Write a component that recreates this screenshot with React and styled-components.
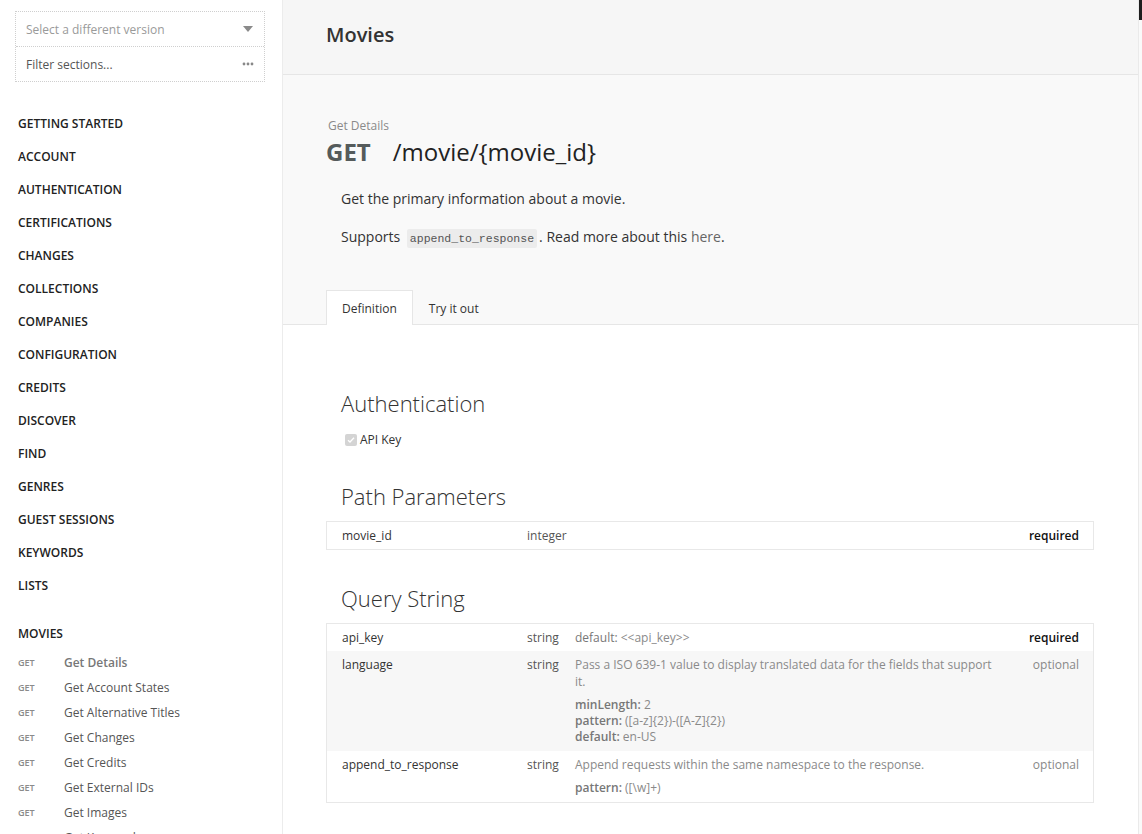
import React from "react";
import styled, { createGlobalStyle } from "styled-components";

const GlobalStyle = createGlobalStyle`
  html, body {
    margin: 0;
    padding: 0;
    background: #ffffff;
  }
  body {
    font-family: "Open Sans", "Liberation Sans", sans-serif;
    color: #333;
    -webkit-font-smoothing: antialiased;
  }
`;

const Page = styled.div`
  display: flex;
  width: 1142px;
  height: 834px;
  overflow: hidden;
`;

const Sidebar = styled.aside`
  width: 282px;
  flex-shrink: 0;
  border-right: 1px solid #ececec;
  height: 834px;
  overflow: hidden;
  background: #fff;
`;

const SearchBox = styled.div`
  margin: 11px 17px 0 15px;
  border: 1px dotted #cfcfcf;
`;

const SearchRow = styled.div`
  display: flex;
  align-items: center;
  justify-content: space-between;
  height: 34px;
  padding: 0 10px;
  font-size: 12px;
  color: ${(p) => (p.muted ? "#9a9a9a" : "#555")};
  & + & {
    border-top: 1px dotted #cfcfcf;
  }
`;

const Caret = styled.span`
  width: 0;
  height: 0;
  border-left: 5px solid transparent;
  border-right: 5px solid transparent;
  border-top: 6px solid #8a8a8a;
  margin-right: 1px;
`;

const NavList = styled.nav`
  padding: 36px 0 0 18px;
`;

const NavItem = styled.div`
  font-size: 12px;
  font-weight: 600;
  color: #222;
  text-transform: uppercase;
  height: ${(p) => (p.heading ? "22px" : "33px")};
  line-height: 12px;
  margin-top: ${(p) => (p.heading ? "15px" : "0")};
`;

const SubItem = styled.div`
  display: flex;
  align-items: center;
  height: 25px;
  font-size: 12px;
`;

const Verb = styled.span`
  width: 46px;
  font-size: 9px;
  color: #8a8a8a;
  font-weight: 600;
`;

const SubName = styled.span`
  color: ${(p) => (p.active ? "#777" : "#555")};
  font-weight: ${(p) => (p.active ? 600 : 400)};
`;

const Main = styled.main`
  flex: 1;
  display: flex;
  flex-direction: column;
  border-right: 1px solid #eaeaea;
  min-width: 0;
`;

const Header = styled.header`
  height: 75px;
  background: #f6f6f6;
  border-bottom: 1px solid #e6e6e6;
  display: flex;
  align-items: center;
  padding: 0 43px 6px;
  box-sizing: border-box;
`;

const PageTitle = styled.h1`
  margin: 0;
  font-size: 20px;
  font-weight: 600;
  color: #333;
`;

const Endpoint = styled.section`
  background: #f9f9f9;
  padding: 43px 0 0 43px;
  border-bottom: 1px solid #e6e6e6;
`;

const EndpointLabel = styled.div`
  font-size: 12px;
  color: #8a8a8a;
  margin-left: 2px;
  line-height: 16px;
`;

const EndpointLine = styled.div`
  display: flex;
  align-items: baseline;
  font-size: 24px;
  line-height: 32px;
  margin-top: 2px;
`;

const Method = styled.span`
  font-weight: 700;
  color: #555b5b;
  margin-right: 22px;
`;

const PathText = styled.span`
  color: #222;
`;

const Description = styled.p`
  margin: ${(p) => (p.first ? "20px" : "16px")} 0 0 15px;
  font-size: 14px;
  line-height: 22px;
  color: #333;
`;

const Code = styled.code`
  font-family: "Liberation Mono", "DejaVu Sans Mono", monospace;
  font-size: 11.5px;
  background: #ececec;
  color: #555;
  padding: 3px 3px;
  border-radius: 2px;
  margin: 0 2px 0 3px;
`;

const Link = styled.a`
  color: #666;
  text-decoration: none;
`;

const Tabs = styled.div`
  display: flex;
  margin-top: 40px;
  margin-bottom: -1px;
`;

const Tab = styled.div`
  height: 35px;
  display: flex;
  align-items: center;
  padding: 1px 15px 0;
  font-size: 12px;
  color: #333;
  box-sizing: border-box;
  border: 1px solid ${(p) => (p.active ? "#e6e6e6" : "transparent")};
  border-bottom: none;
  background: ${(p) => (p.active ? "#fff" : "transparent")};
`;

const Body = styled.div`
  padding: 63px 44px 0 43px;
`;

const SectionTitle = styled.h2`
  margin: ${(p) => (p.tight ? "0" : "33px")} 0 10px 15px;
  font-size: 22px;
  font-weight: 300;
  color: #333;
  line-height: 30px;
`;

const CheckRow = styled.label`
  display: flex;
  align-items: center;
  margin: 14px 0 0 19px;
  font-size: 12px;
  color: #333;
  gap: 3px;
  line-height: 16px;
`;

const CheckBox = styled.span`
  width: 12px;
  height: 12px;
  border-radius: 2px;
  background: #d4d4d4;
  display: inline-flex;
  align-items: center;
  justify-content: center;
`;

const Table = styled.div`
  border: 1px solid #e8e8e8;
`;

const Row = styled.div`
  display: grid;
  grid-template-columns: 185px 48px 1fr 70px;
  padding: ${(p) => (p.tall ? "5px 14px 6px 15px" : "5px 14px 5px 15px")};
  background: ${(p) => (p.striped ? "#f7f7f7" : "#fff")};
  font-size: 12px;
  line-height: 17px;
`;

const Name = styled.div`
  color: #333;
`;

const Type = styled.div`
  color: #555;
`;

const Desc = styled.div`
  color: #8a8a8a;
  padding-right: 8px;
`;

const Extra = styled.div`
  margin-top: ${(p) => (p.spaced ? "7px" : "0")};
  line-height: 16px;
`;

const Key = styled.span`
  color: #777;
  font-weight: ${(p) => (p.plain ? 400 : 600)};
`;

const Req = styled.div`
  text-align: right;
  color: ${(p) => (p.required ? "#111" : "#888")};
  font-weight: ${(p) => (p.required ? 600 : 400)};
`;

const Scrollbar = styled.div`
  width: 3px;
  flex-shrink: 0;
  background: #fafafa;
`;

const Thumb = styled.div`
  height: 20px;
  background: #1e1e1e;
`;

const sections = [
  "Getting Started",
  "Account",
  "Authentication",
  "Certifications",
  "Changes",
  "Collections",
  "Companies",
  "Configuration",
  "Credits",
  "Discover",
  "Find",
  "Genres",
  "Guest Sessions",
  "Keywords",
  "Lists",
];

const movieEndpoints = [
  "Get Details",
  "Get Account States",
  "Get Alternative Titles",
  "Get Changes",
  "Get Credits",
  "Get External IDs",
  "Get Images",
  "Get Keywords",
];

const App = () => {
  return (
    <>
      <GlobalStyle />
      <Page>
        <Sidebar>
          <SearchBox>
            <SearchRow muted>
              Select a different version
              <Caret />
            </SearchRow>
            <SearchRow>
              Filter sections...
              <svg width="12" height="4" viewBox="0 0 12 4">
                <circle cx="2" cy="2" r="1.4" fill="#888" />
                <circle cx="6" cy="2" r="1.4" fill="#888" />
                <circle cx="10" cy="2" r="1.4" fill="#888" />
              </svg>
            </SearchRow>
          </SearchBox>
          <NavList>
            {sections.map((item) => (
              <NavItem key={item}>{item}</NavItem>
            ))}
            <NavItem heading>Movies</NavItem>
            {movieEndpoints.map((item, index) => (
              <SubItem key={item}>
                <Verb>GET</Verb>
                <SubName active={index === 0}>{item}</SubName>
              </SubItem>
            ))}
          </NavList>
        </Sidebar>

        <Main>
          <Header>
            <PageTitle>Movies</PageTitle>
          </Header>
          <Endpoint>
            <EndpointLabel>Get Details</EndpointLabel>
            <EndpointLine>
              <Method>GET</Method>
              <PathText>/movie/{"{movie_id}"}</PathText>
            </EndpointLine>
            <Description first>Get the primary information about a movie.</Description>
            <Description>
              Supports <Code>append_to_response</Code>. Read more about this{" "}
              <Link href="#">here</Link>.
            </Description>
            <Tabs>
              <Tab active>Definition</Tab>
              <Tab>Try it out</Tab>
            </Tabs>
          </Endpoint>

          <Body>
            <SectionTitle tight>Authentication</SectionTitle>
            <CheckRow>
              <CheckBox>
                <svg width="8" height="8" viewBox="0 0 8 8">
                  <path d="M1 4.2 L3 6 L7 1.8" stroke="#fff" strokeWidth="1.3" fill="none" />
                </svg>
              </CheckBox>
              API Key
            </CheckRow>

            <SectionTitle>Path Parameters</SectionTitle>
            <Table>
              <Row>
                <Name>movie_id</Name>
                <Type>integer</Type>
                <Desc />
                <Req required>required</Req>
              </Row>
            </Table>

            <SectionTitle>Query String</SectionTitle>
            <Table>
              <Row>
                <Name>api_key</Name>
                <Type>string</Type>
                <Desc>
                  <Key plain>default:</Key> &lt;&lt;api_key&gt;&gt;
                </Desc>
                <Req required>required</Req>
              </Row>
              <Row striped tall>
                <Name>language</Name>
                <Type>string</Type>
                <Desc>
                  Pass a ISO 639-1 value to display translated data for the fields that support it.
                  <Extra spaced>
                    <Key>minLength:</Key> 2
                  </Extra>
                  <Extra>
                    <Key>pattern:</Key> ([a-z]{"{2}"})-([A-Z]{"{2}"})
                  </Extra>
                  <Extra>
                    <Key>default:</Key> en-US
                  </Extra>
                </Desc>
                <Req>optional</Req>
              </Row>
              <Row tall>
                <Name>append_to_response</Name>
                <Type>string</Type>
                <Desc>
                  Append requests within the same namespace to the response.
                  <Extra spaced>
                    <Key>pattern:</Key> ([\w]+)
                  </Extra>
                </Desc>
                <Req>optional</Req>
              </Row>
            </Table>
          </Body>
        </Main>
        <Scrollbar>
          <Thumb />
        </Scrollbar>
      </Page>
    </>
  );
};

export default App;
